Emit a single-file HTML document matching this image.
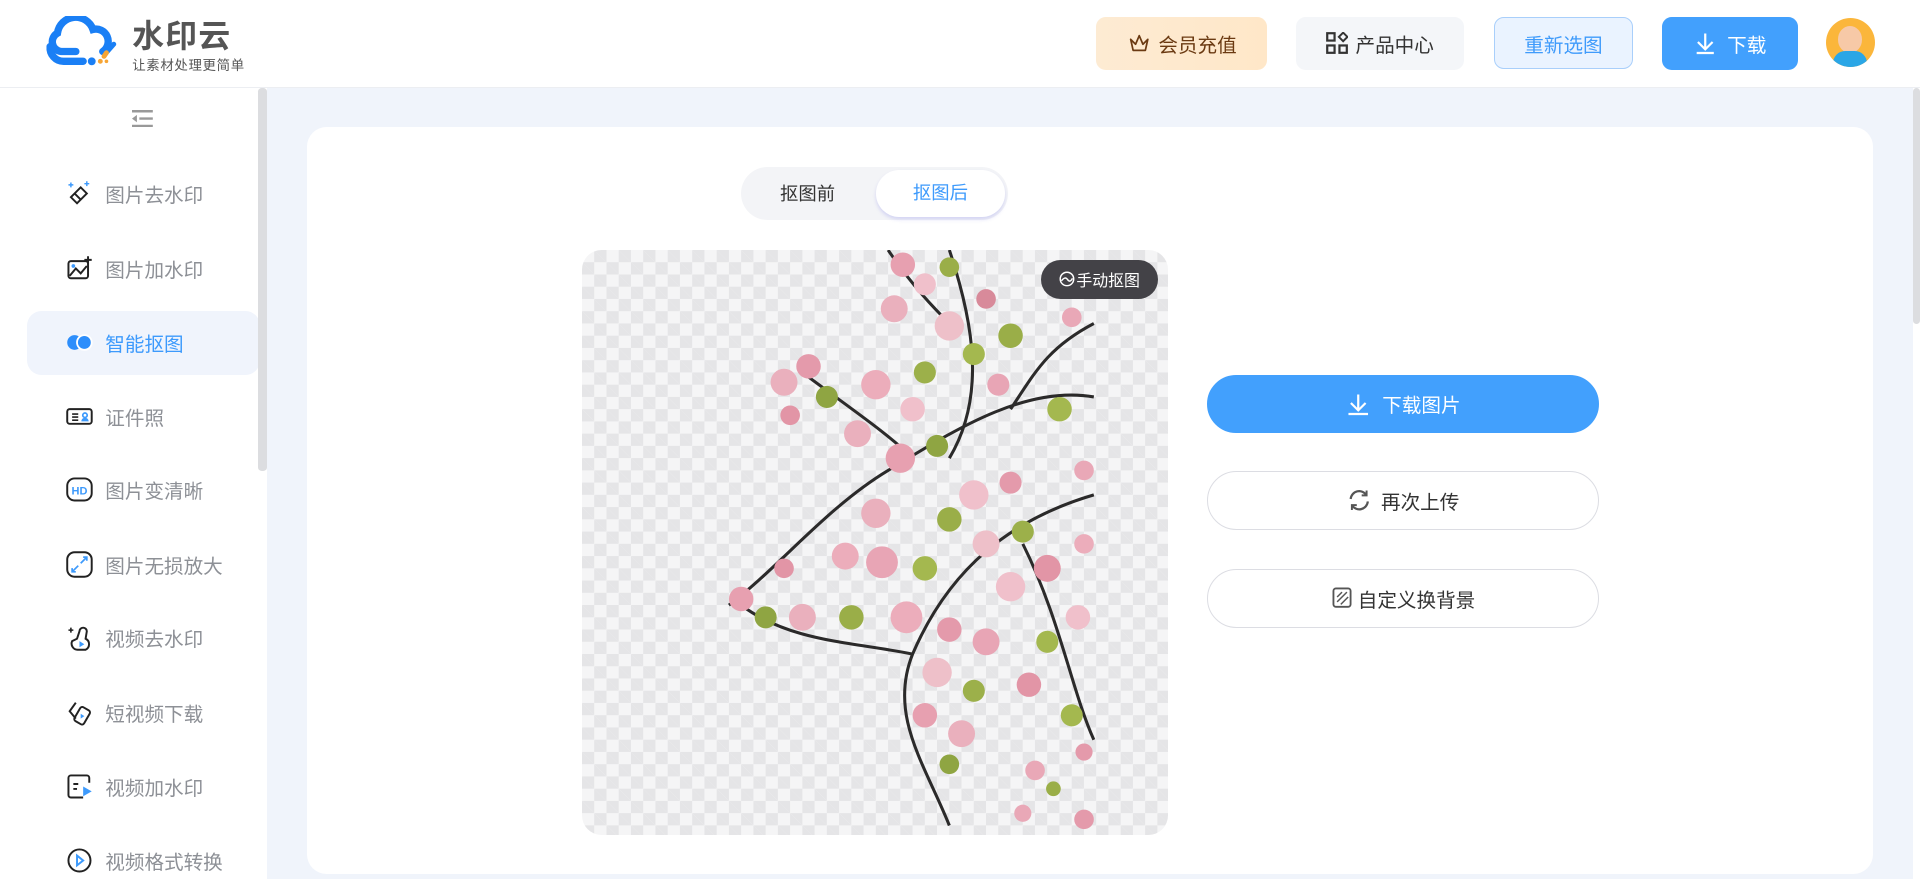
<!DOCTYPE html>
<html><head><meta charset="utf-8">
<style>
html,body{margin:0;padding:0;width:1920px;height:879px;overflow:hidden;background:#fff;}
#root{zoom:1.22449;width:1568px;height:718px;position:relative;font-family:"Liberation Sans","Noto Sans CJK SC",sans-serif;}
.hdr{position:absolute;left:0;top:0;width:1568px;height:71px;background:#fff;border-bottom:1px solid #eceef2;}
.btn{position:absolute;top:14px;height:43px;border-radius:8px;display:flex;align-items:center;justify-content:center;font-size:16px;}
.side{position:absolute;left:0;top:72px;width:218px;height:646px;background:#fff;}
.item{position:absolute;left:22px;width:190px;height:52px;display:flex;align-items:center;font-size:16px;color:#8d9096;}
.item svg{margin-left:32px;margin-right:10px;}
.main{position:absolute;left:218px;top:72px;width:1344px;height:646px;background:#f0f4fb;}
.card{position:absolute;left:33px;top:32px;width:1279px;height:610px;background:#fff;border-radius:16px;}
.rb{position:absolute;left:735px;width:318px;height:46px;border-radius:24px;display:flex;align-items:center;justify-content:center;font-size:16px;color:#333;border:1px solid #dcdde3;}
</style></head><body><div id="root">
<div class="hdr">
 <svg style="position:absolute;left:36px;top:13px" width="64" height="46" viewBox="0 0 64 46">
  <path d="M26 29 H14 A8 8 0 0 1 11 14 A15 15 0 0 1 40 11 A10 10 0 0 1 48 29" fill="none" stroke="#1a7ff5" stroke-width="6" stroke-linecap="round"/>
  <path d="M5 25 A11 11 0 0 0 16 37 H32" fill="none" stroke="#1a7ff5" stroke-width="6" stroke-linecap="round"/>
  <circle cx="39" cy="37" r="3.2" fill="#1a7ff5"/><circle cx="46" cy="37" r="2" fill="#f7a535"/><circle cx="51" cy="37" r="1.5" fill="#f7a535"/>
  <path d="M50 31 L57 23" stroke="#1a7ff5" stroke-width="4" stroke-linecap="round"/>
  <path d="M49 33 L51 30" stroke="#f7a535" stroke-width="4" stroke-linecap="round"/>
 </svg>
 <div style="position:absolute;left:108px;top:15px;font-size:26px;font-weight:bold;color:#555;letter-spacing:1px;line-height:30px">水印云</div>
 <div style="position:absolute;left:108px;top:44px;font-size:11px;color:#555;letter-spacing:0.5px">让素材处理更简单</div>
 <div class="btn" style="left:895px;width:140px;background:linear-gradient(90deg,#fdebd3,#ffe7c8);color:#6b3a12">
  <svg width="20" height="18" viewBox="0 0 20 18" style="margin-right:6px"><path d="M3 6 L5 15 H15 L17 6 L13 10 L10 3 L7 10 Z" fill="none" stroke="#6b3a12" stroke-width="1.4" stroke-linejoin="round"/></svg>会员充值</div>
 <div class="btn" style="left:1058px;width:138px;background:#f4f6f9;color:#333">
  <svg width="18" height="18" viewBox="0 0 18 18" style="margin-right:6px"><rect x="1" y="1" width="6" height="6" fill="none" stroke="#333" stroke-width="1.8"/><rect x="1" y="11" width="6" height="6" fill="none" stroke="#333" stroke-width="1.8"/><rect x="11" y="11" width="6" height="6" fill="none" stroke="#333" stroke-width="1.8"/><path d="M14 0.5 L17.5 4 L14 7.5 L10.5 4Z" fill="none" stroke="#333" stroke-width="1.6"/></svg>产品中心</div>
 <div class="btn" style="left:1220px;width:112px;background:#eaf3ff;border:1px solid #a9cffb;color:#3f9bfb;height:41px">重新选图</div>
 <div class="btn" style="left:1357px;width:111px;background:#42a0fd;color:#fff">
  <svg width="20" height="20" viewBox="0 0 20 20" style="margin-right:8px"><path d="M10 2 V14 M4 9 L10 15 L16 9 M3 18 H17" stroke="#fff" stroke-width="1.8" fill="none"/></svg>下载</div>
 <div style="position:absolute;left:1491px;top:15px;width:40px;height:40px;border-radius:50%;background:#fbb63b;overflow:hidden">
  <div style="position:absolute;left:10px;top:6px;width:20px;height:22px;border-radius:50%;background:#f7c9a7"></div>
  <div style="position:absolute;left:6px;top:27px;width:28px;height:20px;border-radius:10px 10px 0 0;background:#2aa6e6"></div>
 </div>
</div>
<div class="side">
 <svg style="position:absolute;left:108px;top:18px" width="18" height="14" viewBox="0 0 18 14"><path d="M0 1H17M6 7H17M0 13H17" stroke="#999" stroke-width="2"/><path d="M0 7 L4 4 V10Z" fill="#999"/></svg>
 <div class="item" style="top:60px"><svg width="22" height="22" viewBox="0 0 22 22"><path d="M4 14 L12 6 L17 11 L9 19 Z M7 11 L12 16" fill="none" stroke="#222" stroke-width="1.6"/><path d="M4 2v4M2 4h4M17 1v4M15 3h4" stroke="#3d9afc" stroke-width="1.2"/></svg><span>图片去水印</span></div>
 <div class="item" style="top:121px"><svg width="22" height="22" viewBox="0 0 22 22"><rect x="2" y="5" width="16" height="14" rx="2" fill="none" stroke="#222" stroke-width="1.6"/><path d="M3 17 L8 11 L12 15 L17 9" fill="none" stroke="#222" stroke-width="1.6"/><circle cx="6" cy="9" r="1.5" fill="#3d9afc"/><path d="M18 1v6M15 4h6" stroke="#222" stroke-width="1.6"/></svg><span>图片加水印</span></div>
 <div class="item" style="top:182px;background:#f0f4fc;border-radius:12px;width:190px;color:#3d9afc"><svg width="22" height="22" viewBox="0 0 22 22"><circle cx="7" cy="11" r="6" fill="#2d8efb"/><circle cx="15" cy="11" r="6" fill="#2d8efb" stroke="#fff" stroke-width="1.5"/></svg><span>智能抠图</span></div>
 <div class="item" style="top:242px"><svg width="22" height="22" viewBox="0 0 22 22"><rect x="1" y="5" width="20" height="12" rx="2" fill="none" stroke="#222" stroke-width="1.6"/><path d="M5 9h5M5 11.5h5M5 14h5" stroke="#222" stroke-width="1.3"/><circle cx="15.5" cy="10" r="1.8" fill="none" stroke="#3d9afc" stroke-width="1.4"/><path d="M12.5 15 a3 3 0 0 1 6 0z" fill="#3d9afc"/></svg><span>证件照</span></div>
 <div class="item" style="top:302px"><svg width="22" height="22" viewBox="0 0 22 22"><rect x="1" y="2" width="20" height="18" rx="6" fill="none" stroke="#222" stroke-width="1.6"/><text x="11" y="15" font-size="9" font-weight="bold" fill="#3d9afc" text-anchor="middle" font-family="Liberation Sans">HD</text></svg><span>图片变清晰</span></div>
 <div class="item" style="top:363px"><svg width="22" height="22" viewBox="0 0 22 22"><rect x="1" y="1" width="20" height="20" rx="6" fill="none" stroke="#222" stroke-width="1.6"/><path d="M12 10 L17 5 M14 5h3v3M10 12 L5 17 M5 14v3h3" stroke="#3d9afc" stroke-width="1.4" fill="none"/></svg><span>图片无损放大</span></div>
 <div class="item" style="top:423px"><svg width="22" height="22" viewBox="0 0 22 22"><path d="M5 14 a5 5 0 0 0 5 7 h6 a5 5 0 0 0 0-9 l1-6 a3 3 0 0 0-6 0 l-2 6 z" fill="none" stroke="#222" stroke-width="1.6"/><path d="M11 14 l4 2.5 -4 2.5z" fill="#3d9afc"/><path d="M4 3v4M2 5h4" stroke="#222" stroke-width="1.3"/></svg><span>视频去水印</span></div>
 <div class="item" style="top:484px"><svg width="22" height="22" viewBox="0 0 22 22"><path d="M8 3 L3 10 L8 16" fill="none" stroke="#222" stroke-width="1.6"/><rect x="9" y="7" width="9" height="13" rx="2" transform="rotate(30 13 13)" fill="none" stroke="#222" stroke-width="1.6"/><path d="M12 12 l3 2 -3 2z" fill="#3d9afc"/></svg><span>短视频下载</span></div>
 <div class="item" style="top:544px"><svg width="22" height="22" viewBox="0 0 22 22"><path d="M19 8 V4 a2 2 0 0 0-2-2 H4 a2 2 0 0 0-2 2 V18 a2 2 0 0 0 2 2 H14" fill="none" stroke="#222" stroke-width="1.6"/><path d="M6 9h4M6 13h3" stroke="#222" stroke-width="1.6"/><path d="M14 11 l7 4 -7 4z" fill="#3d9afc"/></svg><span>视频加水印</span></div>
 <div class="item" style="top:605px"><svg width="22" height="22" viewBox="0 0 22 22"><circle cx="11" cy="11" r="9" fill="none" stroke="#222" stroke-width="1.6"/><path d="M9 7 l5 4 -5 4z" fill="none" stroke="#3d9afc" stroke-width="1.6"/></svg><span>视频格式转换</span></div>
 <div style="position:absolute;left:211px;top:0;width:7px;height:313px;background:#dcdde0;border-radius:3px"></div>
</div>
<div class="main">
 <div class="card">
  <div style="position:absolute;left:354px;top:32px;width:218px;height:44px;background:#f3f4f7;border-radius:22px"></div>
  <div style="position:absolute;left:354px;top:32px;width:109px;height:44px;line-height:44px;text-align:center;font-size:15px;color:#333">抠图前</div>
  <div style="position:absolute;left:464px;top:35px;width:106px;height:38px;line-height:38px;text-align:center;font-size:15px;color:#3d9afc;background:#fff;border-radius:19px;box-shadow:0 2px 3px rgba(120,120,230,0.25)">抠图后</div>
  <div style="position:absolute;left:224px;top:100px;width:479px;height:478px;border-radius:16px;overflow:hidden;background-color:#f5f5f6;background-image:linear-gradient(45deg,#e5e5e7 25%,transparent 25%,transparent 75%,#e5e5e7 75%),linear-gradient(45deg,#e5e5e7 25%,transparent 25%,transparent 75%,#e5e5e7 75%);background-size:20px 20px;background-position:0 0,10px 10px">
   <svg style="position:absolute;left:0;top:0" width="479" height="478" viewBox="0 0 479 478">
    <g stroke="#2b2a2a" stroke-width="2.5" fill="none">
     <path d="M418 120 C360 110 300 150 250 180 C200 210 160 260 120 290"/>
     <path d="M418 200 C350 220 300 260 270 330 C250 380 280 420 300 470"/>
     <path d="M300 0 C320 60 330 120 300 170"/>
     <path d="M418 60 C380 80 370 100 350 130"/>
     <path d="M270 330 C220 320 170 320 130 290"/>
     <path d="M360 240 C390 300 400 360 418 400"/>
     <path d="M250 0 C270 30 290 50 300 60"/>
     <path d="M180 100 C220 130 250 150 270 170"/>
    </g>
    <g>
     <circle cx="262" cy="12" r="10" fill="#e7a0b0"/><circle cx="280" cy="28" r="9" fill="#f0c0cb"/><circle cx="300" cy="14" r="8" fill="#9aae48"/>
     <circle cx="255" cy="48" r="11" fill="#eab0bd"/><circle cx="330" cy="40" r="8" fill="#d88a9a"/><circle cx="350" cy="70" r="10" fill="#9aae48"/>
     <circle cx="300" cy="62" r="12" fill="#eec0c9"/><circle cx="320" cy="85" r="9" fill="#a4b84f"/><circle cx="400" cy="55" r="8" fill="#e9a8b7"/>
     <circle cx="165" cy="108" r="11" fill="#eab0bd"/><circle cx="185" cy="95" r="10" fill="#e49aab"/><circle cx="200" cy="120" r="9" fill="#8fa542"/>
     <circle cx="240" cy="110" r="12" fill="#ecadbb"/><circle cx="270" cy="130" r="10" fill="#f0c0cb"/><circle cx="280" cy="100" r="9" fill="#9cb04a"/>
     <circle cx="340" cy="110" r="9" fill="#e8a5b5"/><circle cx="390" cy="130" r="10" fill="#a4b84f"/><circle cx="170" cy="135" r="8" fill="#e295a6"/>
     <circle cx="225" cy="150" r="11" fill="#eab0bd"/><circle cx="260" cy="170" r="12" fill="#e7a0b0"/><circle cx="290" cy="160" r="9" fill="#8fa542"/>
     <circle cx="320" cy="200" r="12" fill="#f0c0cb"/><circle cx="350" cy="190" r="9" fill="#e49aab"/><circle cx="300" cy="220" r="10" fill="#9aae48"/>
     <circle cx="410" cy="180" r="8" fill="#e9a8b7"/><circle cx="240" cy="215" r="12" fill="#eab0bd"/><circle cx="215" cy="250" r="11" fill="#ecadbb"/>
     <circle cx="245" cy="255" r="13" fill="#e8a5b5"/><circle cx="280" cy="260" r="10" fill="#a4b84f"/><circle cx="330" cy="240" r="11" fill="#eec0c9"/>
     <circle cx="360" cy="230" r="9" fill="#9cb04a"/><circle cx="380" cy="260" r="11" fill="#e295a6"/><circle cx="350" cy="275" r="12" fill="#f0c0cb"/>
     <circle cx="130" cy="285" r="10" fill="#e7a0b0"/><circle cx="150" cy="300" r="9" fill="#8fa542"/><circle cx="180" cy="300" r="11" fill="#eab0bd"/>
     <circle cx="220" cy="300" r="10" fill="#9aae48"/><circle cx="265" cy="300" r="13" fill="#ecadbb"/><circle cx="300" cy="310" r="10" fill="#e49aab"/>
     <circle cx="330" cy="320" r="11" fill="#e8a5b5"/><circle cx="380" cy="320" r="9" fill="#a4b84f"/><circle cx="405" cy="300" r="10" fill="#f0c0cb"/>
     <circle cx="290" cy="345" r="12" fill="#eec0c9"/><circle cx="320" cy="360" r="9" fill="#9cb04a"/><circle cx="365" cy="355" r="10" fill="#e295a6"/>
     <circle cx="280" cy="380" r="10" fill="#e7a0b0"/><circle cx="310" cy="395" r="11" fill="#eab0bd"/><circle cx="400" cy="380" r="9" fill="#a4b84f"/>
     <circle cx="300" cy="420" r="8" fill="#8fa542"/><circle cx="370" cy="425" r="8" fill="#e9a8b7"/><circle cx="410" cy="410" r="7" fill="#e49aab"/>
     <circle cx="360" cy="460" r="7" fill="#e9a8b7"/><circle cx="410" cy="465" r="8" fill="#e49aab"/><circle cx="385" cy="440" r="6" fill="#9aae48"/>
     <circle cx="410" cy="240" r="8" fill="#ecadbb"/><circle cx="165" cy="260" r="8" fill="#e295a6"/>
    </g>
   </svg>
   <div style="position:absolute;left:375px;top:8px;width:96px;height:32px;border-radius:16px;background:#434247;color:#fff;font-size:13px;display:flex;align-items:center;justify-content:center"><svg width="13" height="13" viewBox="0 0 13 13" style="margin-right:1px"><circle cx="6.5" cy="6.5" r="5.5" fill="none" stroke="#fff" stroke-width="1.2"/><path d="M2 8 Q5 4 7 7 T11 6" fill="none" stroke="#fff" stroke-width="1.2"/></svg>手动抠图</div>
  </div>
  <div class="rb" style="top:202px;background:#42a0fd;border-color:#42a0fd;color:#fff"><svg width="20" height="20" viewBox="0 0 20 20" style="margin-right:10px"><path d="M10 2 V14 M4 9 L10 15 L16 9 M2 18 H18" stroke="#fff" stroke-width="1.8" fill="none"/></svg>下载图片</div>
  <div class="rb" style="top:281px"><svg width="20" height="20" viewBox="0 0 20 20" style="margin-right:8px"><path d="M3 9 A7 7 0 0 1 16 6 M17 11 A7 7 0 0 1 4 14" fill="none" stroke="#555" stroke-width="1.8"/><path d="M16 2 V6 H12 M4 18 V14 H8" fill="none" stroke="#555" stroke-width="1.6"/></svg>再次上传</div>
  <div class="rb" style="top:361px"><svg width="20" height="20" viewBox="0 0 20 20" style="margin-right:2px"><rect x="2" y="2" width="14" height="15" rx="2" fill="none" stroke="#555" stroke-width="1.5"/><path d="M5 9 L9 5 M5 13 L13 5 M8 15 L14 9" stroke="#555" stroke-width="1.2"/></svg>自定义换背景</div>
 </div>
</div>
<div style="position:absolute;left:1562px;top:72px;width:6px;height:646px;background:#fff"><div style="width:6px;height:193px;background:#dcdde0;border-radius:3px"></div></div>
</div></body></html>
